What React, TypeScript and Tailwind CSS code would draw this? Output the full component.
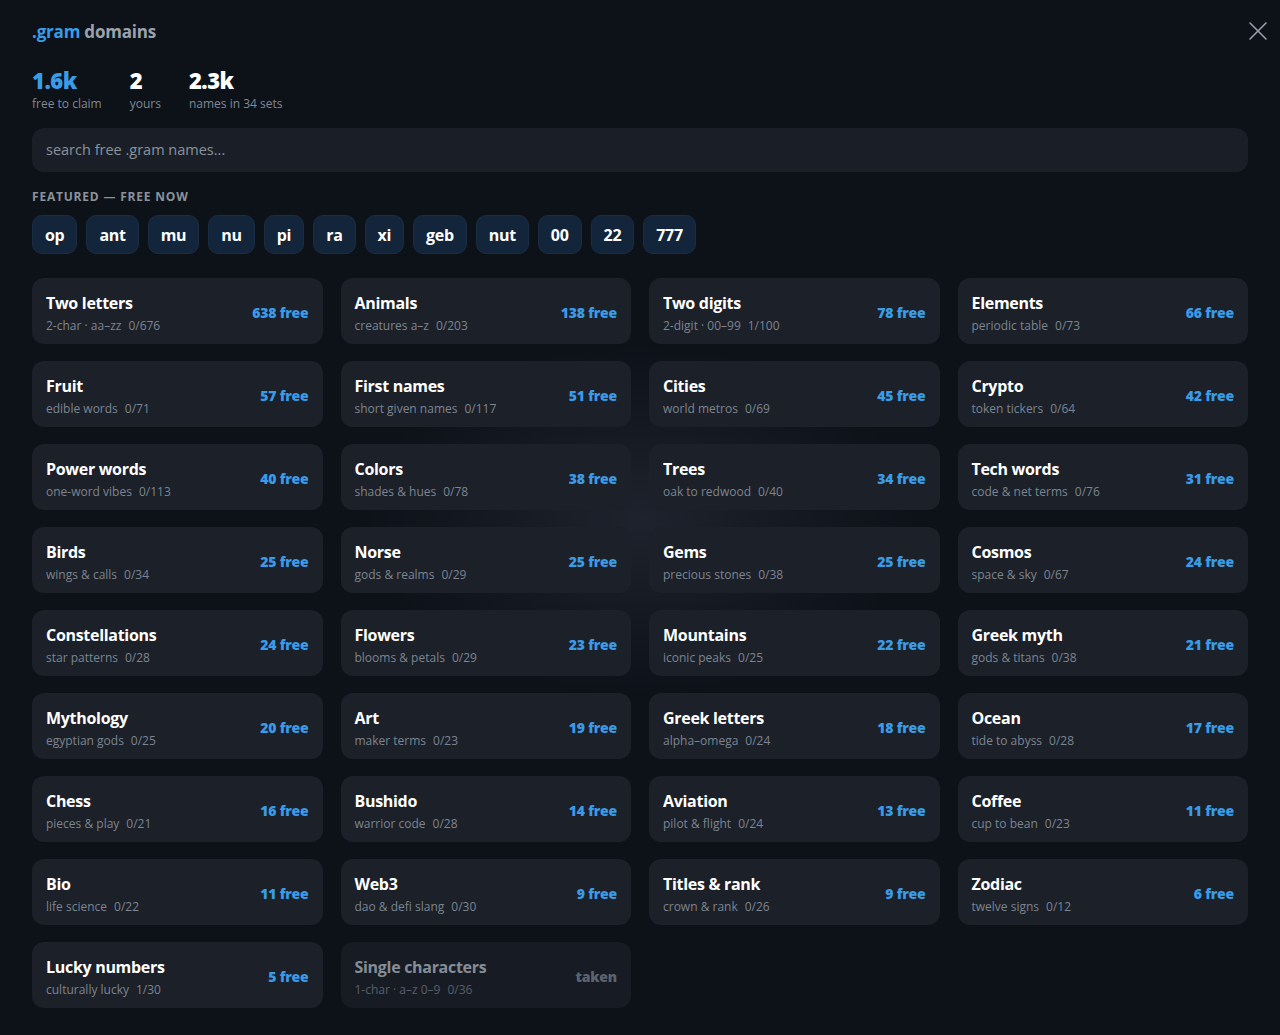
import React from "react";

type Set = { t: string; s: string; c: string; f: string; taken?: boolean };

const sets: Set[] = [
  { t: "Two letters", s: "2-char · aa–zz", c: "0/676", f: "638 free" },
  { t: "Animals", s: "creatures a–z", c: "0/203", f: "138 free" },
  { t: "Two digits", s: "2-digit · 00–99", c: "1/100", f: "78 free" },
  { t: "Elements", s: "periodic table", c: "0/73", f: "66 free" },
  { t: "Fruit", s: "edible words", c: "0/71", f: "57 free" },
  { t: "First names", s: "short given names", c: "0/117", f: "51 free" },
  { t: "Cities", s: "world metros", c: "0/69", f: "45 free" },
  { t: "Crypto", s: "token tickers", c: "0/64", f: "42 free" },
  { t: "Power words", s: "one-word vibes", c: "0/113", f: "40 free" },
  { t: "Colors", s: "shades & hues", c: "0/78", f: "38 free" },
  { t: "Trees", s: "oak to redwood", c: "0/40", f: "34 free" },
  { t: "Tech words", s: "code & net terms", c: "0/76", f: "31 free" },
  { t: "Birds", s: "wings & calls", c: "0/34", f: "25 free" },
  { t: "Norse", s: "gods & realms", c: "0/29", f: "25 free" },
  { t: "Gems", s: "precious stones", c: "0/38", f: "25 free" },
  { t: "Cosmos", s: "space & sky", c: "0/67", f: "24 free" },
  { t: "Constellations", s: "star patterns", c: "0/28", f: "24 free" },
  { t: "Flowers", s: "blooms & petals", c: "0/29", f: "23 free" },
  { t: "Mountains", s: "iconic peaks", c: "0/25", f: "22 free" },
  { t: "Greek myth", s: "gods & titans", c: "0/38", f: "21 free" },
  { t: "Mythology", s: "egyptian gods", c: "0/25", f: "20 free" },
  { t: "Art", s: "maker terms", c: "0/23", f: "19 free" },
  { t: "Greek letters", s: "alpha–omega", c: "0/24", f: "18 free" },
  { t: "Ocean", s: "tide to abyss", c: "0/28", f: "17 free" },
  { t: "Chess", s: "pieces & play", c: "0/21", f: "16 free" },
  { t: "Bushido", s: "warrior code", c: "0/28", f: "14 free" },
  { t: "Aviation", s: "pilot & flight", c: "0/24", f: "13 free" },
  { t: "Coffee", s: "cup to bean", c: "0/23", f: "11 free" },
  { t: "Bio", s: "life science", c: "0/22", f: "11 free" },
  { t: "Web3", s: "dao & defi slang", c: "0/30", f: "9 free" },
  { t: "Titles & rank", s: "crown & rank", c: "0/26", f: "9 free" },
  { t: "Zodiac", s: "twelve signs", c: "0/12", f: "6 free" },
  { t: "Lucky numbers", s: "culturally lucky", c: "1/30", f: "5 free" },
  { t: "Single characters", s: "1-char · a–z 0–9", c: "0/36", f: "taken", taken: true },
];

const chips = ["op", "ant", "mu", "nu", "pi", "ra", "xi", "geb", "nut", "00", "22", "777"];

export default function App() {
  return (
    <div
      className="relative min-h-[1035px] w-full overflow-hidden bg-[#0d1219] text-white"
      style={{ fontFamily: '"Open Sans", "Noto Sans", sans-serif' }}
    >
      <div className="pointer-events-none absolute left-[340px] top-[330px] h-[380px] w-[600px] rounded-full bg-[radial-gradient(ellipse_at_center,rgba(60,66,80,0.35),rgba(13,18,25,0)_65%)]" />
      <button className="absolute right-[12px] top-[21px] text-[#9aa1ab]">
        <svg width="20" height="20" viewBox="0 0 20 20" fill="none" stroke="currentColor" strokeWidth="1.6" strokeLinecap="round">
          <path d="M2 2L18 18M18 2L2 18" />
        </svg>
      </button>
      <div className="relative px-[32px] pt-[20px]">
        <h1 className="text-[17px] font-bold leading-[24px] tracking-[-0.2px]">
          <span className="text-[#3a9be6]">.gram</span>{" "}
          <span className="text-[#9aa3ae]">domains</span>
        </h1>
        <div className="mt-[22px] flex gap-[28px]">
          <div>
            <div className="text-[22px] font-extrabold leading-[28px] tracking-[-0.5px] text-[#3a9be6]">1.6k</div>
            <div className="mt-[2px] text-[12px] leading-[16px] text-[#7f8893]">free to claim</div>
          </div>
          <div>
            <div className="text-[22px] font-extrabold leading-[28px] tracking-[-0.5px]">2</div>
            <div className="mt-[2px] text-[12px] leading-[16px] text-[#7f8893]">yours</div>
          </div>
          <div>
            <div className="text-[22px] font-extrabold leading-[28px] tracking-[-0.5px]">2.3k</div>
            <div className="mt-[2px] text-[12px] leading-[16px] text-[#7f8893]">names in 34 sets</div>
          </div>
        </div>
        <div className="mt-[16px] flex h-[44px] w-[1216px] items-center rounded-[12px] bg-[#1a1f27] px-[14px] text-[14.5px] text-[#8a929c]">
          search free .gram names...
        </div>
        <div className="mt-[16px] text-[12px] font-bold uppercase leading-[18px] tracking-[0.8px] text-[#8a929c]">
          Featured — free now
        </div>
        <div className="mt-[9px] flex gap-[9px]">
          {chips.map((c) => (
            <div
              key={c}
              className="flex h-[39px] items-center rounded-[10px] border border-[#1a2d42] bg-[#13253a] px-[12px] text-[16px] font-bold tracking-[-0.3px] text-white"
            >
              {c}
            </div>
          ))}
        </div>
        <div className="mt-[24px] grid w-[1216px] grid-cols-4 gap-x-[18px] gap-y-[17px]">
          {sets.map((s) => (
            <div
              key={s.t}
              className={`flex h-[66px] items-start justify-between rounded-[12px] px-[14px] ${
                s.taken ? "bg-[#171c24]" : "bg-[#1b2029]"
              }`}
            >
              <div className="flex flex-col pt-[14px]">
                <div
                  className={`text-[16px] font-bold leading-[22px] tracking-[-0.3px] ${
                    s.taken ? "text-[#868d96]" : "text-white"
                  }`}
                >
                  {s.t}
                </div>
                <div className={`mt-[3px] text-[12px] leading-[18px] ${s.taken ? "text-[#575e68]" : "text-[#7d8590]"}`}>
                  {s.s}
                  <span className="ml-[7px]">{s.c}</span>
                </div>
              </div>
              <div
                className={`mt-[25px] text-[14px] font-extrabold leading-[20px] tracking-[-0.2px] ${
                  s.taken ? "text-[#5c636d]" : "text-[#3a9be6]"
                }`}
              >
                {s.f}
              </div>
            </div>
          ))}
        </div>
      </div>
    </div>
  );
}
